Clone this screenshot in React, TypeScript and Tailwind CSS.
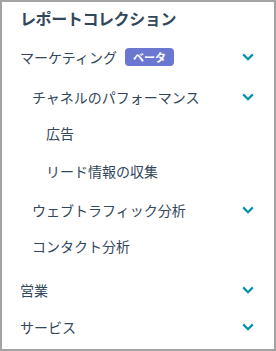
type Row = {
  label: string;
  indent: string;
  space: string;
  chevron?: boolean;
  badge?: string;
};

const ROWS: Row[] = [
  { label: "マーケティング", indent: "pl-0", space: "mt-[5px]", chevron: true, badge: "ベータ" },
  { label: "チャネルのパフォーマンス", indent: "pl-3", space: "mt-1", chevron: true },
  { label: "広告", indent: "pl-[26px]", space: "mt-0" },
  { label: "リード情報の収集", indent: "pl-[26px]", space: "mt-0.5" },
  { label: "ウェブトラフィック分析", indent: "pl-3", space: "mt-[3px]", chevron: true },
  { label: "コンタクト分析", indent: "pl-3", space: "mt-0" },
  { label: "営業", indent: "pl-0", space: "mt-2", chevron: true },
  { label: "サービス", indent: "pl-0", space: "mt-px", chevron: true },
];

function Chevron() {
  return (
    <svg width="12" height="8" viewBox="0 0 12 8" fill="none" className="text-[#0091ae]">
      <path d="M1.2 1.4 6 6.2l4.8-4.8" stroke="currentColor" strokeWidth="2.2" />
    </svg>
  );
}

export default function App() {
  return (
    <div
      className="w-[276px] h-[351px] border-2 border-[#a3a3a3] bg-white text-[#33475b] overflow-hidden"
      style={{ fontFamily: '"Noto Sans CJK JP", "Noto Sans", sans-serif' }}
    >
      <div className="pl-[18px] pr-[20px]">
        <h2 className="h-[32px] flex items-center text-base font-bold tracking-tight">
          レポートコレクション
        </h2>
        <ul>
          {ROWS.map((row) => (
            <li
              key={row.label}
              className={`h-9 flex items-center justify-between ${row.indent} ${row.space}`}
            >
              <div className="flex items-center gap-2">
                <span className="text-sm leading-5">{row.label}</span>
                {row.badge && (
                  <span className="rounded bg-[#6a78d1] px-2 h-[18px] flex items-center text-[11px] font-bold text-white">
                    {row.badge}
                  </span>
                )}
              </div>
              {row.chevron && <Chevron />}
            </li>
          ))}
        </ul>
      </div>
    </div>
  );
}
